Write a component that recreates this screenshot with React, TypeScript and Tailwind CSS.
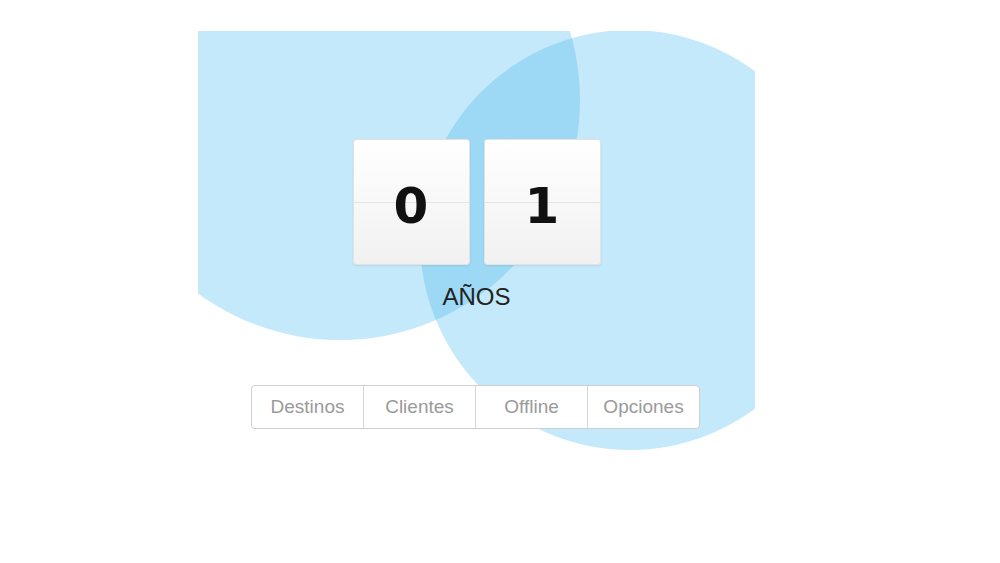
const digits = ["0", "1"];
const tabs = ["Destinos", "Clientes", "Offline", "Opciones"];

const Blobs = () => (
  <svg
    className="absolute inset-0"
    width="557"
    height="420"
    viewBox="0 0 557 420"
  >
    <defs>
      <clipPath id="leftCircle">
        <circle cx="142" cy="69" r="240" />
      </clipPath>
    </defs>
    <circle cx="142" cy="69" r="240" fill="#c4e9fa" />
    <circle cx="432" cy="209" r="210" fill="#c4e9fa" />
    <circle
      cx="432"
      cy="209"
      r="210"
      fill="#9dd9f4"
      clipPath="url(#leftCircle)"
    />
  </svg>
);

const FlipCard = ({ value }: { value: string }) => (
  <div className="relative w-[117px] h-[126px] rounded-[3px] border border-[#e2e2e2] bg-gradient-to-b from-white to-[#f1f1f1] shadow-[0_1px_2px_rgba(0,0,0,0.08)] flex items-center justify-center">
    <div className="absolute left-0 right-0 top-[62px] h-px bg-[#e4e4e4]" />
    <span className="relative pt-[8px] text-[50px] leading-none font-bold text-[#111] font-['DejaVu_Sans',sans-serif]">
      {value}
    </span>
  </div>
);

export default function App() {
  return (
    <div className="w-[1000px] h-[563px] bg-white font-['Liberation_Sans',Arial,sans-serif]">
      <div className="relative ml-[198px] pt-[31px] w-[557px]">
        <div className="relative w-[557px] h-[420px] overflow-hidden">
          <Blobs />
          <div className="relative flex flex-col items-center pt-[108px]">
            <div className="flex gap-[14px]">
              {digits.map((d, i) => (
                <FlipCard key={i} value={d} />
              ))}
            </div>
            <p className="mt-[18px] text-[24px] leading-[28px] text-[#222]">
              AÑOS
            </p>
            <div className="mt-[74px] -ml-[2px] flex h-[44px] rounded-[4px] border border-[#cfcfcf] bg-white overflow-hidden">
              {tabs.map((t, i) => (
                <div
                  key={t}
                  className={
                    i === 0
                      ? "w-[111px] flex items-center justify-center text-[19px] text-[#9a9a9a]"
                      : "w-[112px] flex items-center justify-center border-l border-[#d6d6d6] text-[19px] text-[#9a9a9a]"
                  }
                >
                  {t}
                </div>
              ))}
            </div>
          </div>
        </div>
      </div>
    </div>
  );
}
